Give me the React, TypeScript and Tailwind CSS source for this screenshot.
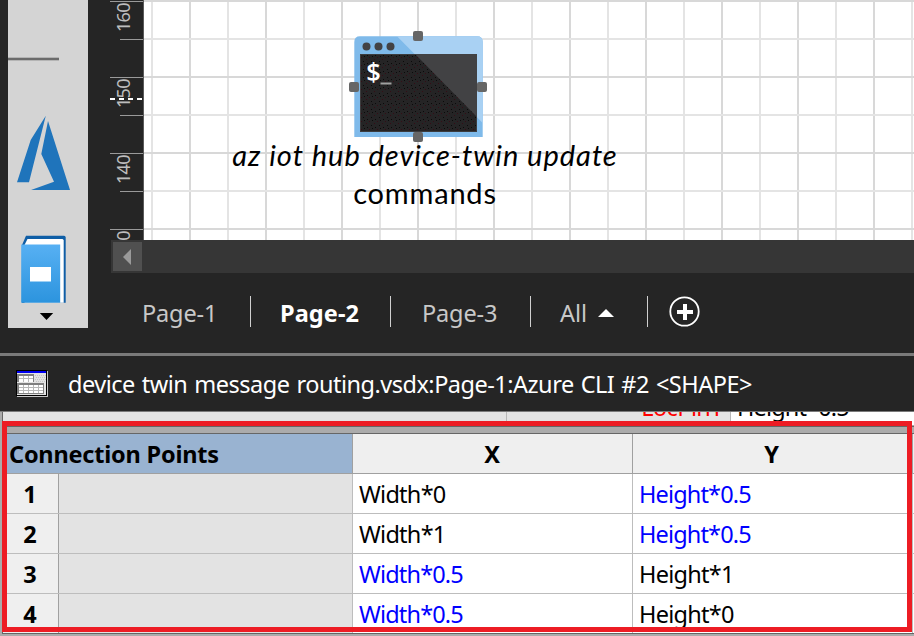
import React from "react";

const UI = "font-['Noto_Sans','Open_Sans',sans-serif]";

function StencilPanel() {
  return (
    <div className="ml-2 h-[328px] w-20 shrink-0 bg-[#d4d4d4]">
      <div className="h-[57px]" />
      <div className="h-1 w-[51px] border-y border-[#b4b4b4] bg-[#6b6b6b]" />
      <svg className="mt-[49px] block" width="80" height="218" viewBox="8 110 80 218">
        <path fill="#1f74bb" d="M45.8 115.7 30.7 140 17 182.3H29ZM48 121 41.3 154 54 181.7 31 190H70Z" />
        <defs>
          <linearGradient id="cover" x1="0" y1="0" x2="0" y2="1">
            <stop offset="0" stopColor="#57b0f3" />
            <stop offset="1" stopColor="#2c94de" />
          </linearGradient>
        </defs>
        <path fill="#0f5ea6" d="M22 245 26 235.7H64Q65.7 235.7 65.7 237.5V302.7H22Z" />
        <path fill="#fff" d="M24.5 245 27.5 239H62.5L63.7 240V302.7H24.5Z" />
        <rect x="21.2" y="244.5" width="39" height="58.2" fill="url(#cover)" />
        <rect x="30" y="267" width="21" height="14.5" fill="#fff" />
        <path fill="#000" d="M39.8 313H53.2L46.5 320Z" />
      </svg>
    </div>
  );
}

function Ruler() {
  return (
    <div className="relative ml-[22px] h-60 w-[34px] shrink-0 overflow-hidden border-r border-[#5a5a5a] pt-px">
      {["160", "150", "140", "130"].map((n) => (
        <div key={n} className="flex h-[76px] flex-col items-end">
          <div className="h-px w-full shrink-0 bg-[#9a9a9a]" />
          <div className="flex h-[37px] w-full justify-center pr-[7px]">
            <span className="mt-px h-[29px] rotate-180 text-[18px] leading-[24px] tracking-[-0.7px] text-[#bdbdbd] [writing-mode:vertical-rl]">
              {n}
            </span>
          </div>
          <div className="h-px w-[23px] shrink-0 bg-[#9a9a9a]" />
        </div>
      ))}
      <div className="absolute left-0 top-[98px] h-0.5 w-[34px] bg-[repeating-linear-gradient(90deg,#fff_0_5px,transparent_5px_9px)]" />
    </div>
  );
}

function Terminal() {
  return (
    <svg className="absolute left-[204px] top-[30px]" width="142" height="114" viewBox="348 30 142 114">
      <defs>
        <pattern id="grain" width="8" height="8" patternUnits="userSpaceOnUse">
          <rect width="8" height="8" fill="#252425" />
          <path fill="#360d16" d="M1 1h1v1H1zM6 3h1v1H6z" />
          <path fill="#0a0a0a" d="M3 5h1v1H3zM4 0h1v1H4zM7 7h1v1H7z" />
        </pattern>
      </defs>
      <path fill="#7fbaea" d="M354.3 137V42Q354.3 36.3 360 36.3H477Q482.7 36.3 482.7 42V137Z" />
      <path fill="#a9d1f3" d="M397 36.3H477Q482.7 36.3 482.7 42V123Z" />
      <rect x="360" y="54" width="117" height="78" fill="#3c3c3e" />
      <rect x="361" y="55" width="115" height="76" fill="url(#grain)" />
      <path fill="#424244" d="M415 54H477V117Z" />
      <g fill="#424244">
        <circle cx="366.5" cy="46.5" r="4" />
        <circle cx="378.5" cy="46.5" r="4" />
        <circle cx="390.5" cy="46.5" r="4" />
      </g>
      <text x="366.2" y="81" fontSize="25.5" fontWeight="600" fill="#fff" className="font-['Open_Sans',sans-serif]">$</text>
      <rect x="380.5" y="82.5" width="11" height="2" fill="#a0a0a0" />
      <g fill="#666">
        <rect x="413" y="31" width="10" height="10" rx="2" />
        <rect x="349" y="82" width="10" height="10" rx="2" />
        <rect x="477" y="82" width="10" height="10" rx="2" />
        <rect x="413" y="132" width="10" height="10" rx="2" />
      </g>
    </svg>
  );
}

function Canvas() {
  return (
    <div className="relative h-60 grow overflow-hidden bg-white">
      <svg className="absolute inset-0" width="770" height="240">
        {Array.from({ length: 21 }, (_, i) => (
          <rect key={i} x={7 + i * 38} y="0" width="2" height="240" fill={i % 2 ? "#d8d8d8" : "#e4e4e4"} />
        ))}
        {Array.from({ length: 7 }, (_, i) => (
          <rect key={i} x="0" y={i * 38} width="770" height="2" fill={i % 2 ? "#e4e4e4" : "#d8d8d8"} />
        ))}
      </svg>
      <Terminal />
      <div className="absolute left-[81px] top-[136px] w-[400px] text-center font-['Lato',sans-serif] text-[29px] leading-[38px] text-black">
        <div className="whitespace-nowrap italic tracking-[1px]">az iot hub device-twin update</div>
        <div className="tracking-[0.8px]">commands</div>
      </div>
    </div>
  );
}

const Sep = () => <div className="h-[31px] w-px shrink-0 bg-[#d0d0d0]" />;

function PageTabs() {
  return (
    <div className="flex h-[80px] items-start pl-[111px] pt-[23px] text-[23.5px] leading-[34px] text-[#c8c8c8]">
      <div className="w-[139px] pl-[31px] tracking-[-0.15px]">Page-1</div>
      <Sep />
      <div className="w-[139px] pl-[29px] font-bold tracking-[0.1px] text-white">Page-2</div>
      <Sep />
      <div className="w-[139px] pl-[31px] tracking-[-0.15px]">Page-3</div>
      <Sep />
      <div className="flex w-[116px] pl-[29px]">
        <span className="w-[38px] tracking-[-0.1px]">All</span>
        <svg className="mt-[13px]" width="16" height="8">
          <path d="M8 0 16 8H0Z" fill="#fff" />
        </svg>
      </div>
      <Sep />
      <svg className="ml-[21px]" width="32" height="32" viewBox="669 296 32 32">
        <circle cx="684.5" cy="311.5" r="14.2" fill="none" stroke="#fff" strokeWidth="1.8" />
        <path d="M683 304h4v6h6v4h-6v6h-4v-6h-6v-4h6z" fill="#fff" />
      </svg>
    </div>
  );
}

function SheetIcon() {
  return (
    <svg className="shrink-0" width="32" height="27" viewBox="16 370 32 27" shapeRendering="crispEdges">
      <path fill="#c4c4c4" d="M17 371h31v26H17z" />
      <path fill="#000" d="M16 370h31v26H16z" />
      <path fill="#e2e2e2" d="M17 373h29v22H17z" />
      <path fill="#0000f0" d="M17 371h29v2H17z" />
      <path fill="#808080" d="M17 374h17v8H17zM17 383h27v11H17z" />
      <path fill="#fff" d="M19 376h14v6H19zM19 385h24v8H19z" />
      <path stroke="#b8b8b8" d="M19 378.5h14M23.5 376v6M28.5 376v6M19 387.5h24M19 390.5h24M23.5 385v8M28.5 385v8M33.5 385v8M38.5 385v8" />
      <path stroke="#c4c4c4" strokeDasharray="1 1" d="M35 375.5h11M36 377.5h10M35 379.5h11M36 381.5h10" />
    </svg>
  );
}

const rows = [
  ["1", "Width*0", "Height*0.5", false, true],
  ["2", "Width*1", "Height*0.5", false, true],
  ["3", "Width*0.5", "Height*1", true, false],
  ["4", "Width*0.5", "Height*0", true, false],
] as const;

function Value({ text, blue }: { text: string; blue: boolean }) {
  return (
    <span className={blue ? "text-[#0000ff] tracking-[-0.85px]" : "text-black tracking-[-0.75px]"}>{text}</span>
  );
}

function ShapeSheet() {
  return (
    <div className="relative h-[224px] overflow-hidden bg-[#ababab] pl-0.5 text-[23.5px] leading-[40px]">
      <div className="h-[222px] w-[912px] overflow-hidden border-b border-l border-[#666] bg-white">
        <div className="flex h-[14px] items-end overflow-hidden border-b border-[#a8a8a8] bg-[#e3e3e3]">
          <div className="h-full w-[504px] border-r border-[#b8b8b8]" />
          <div className="flex h-full w-[224px] items-end justify-end border-r border-[#b8b8b8] pr-[7px]">
            <span className="-mb-0.5 tracking-[-0.6px] text-[#ff0000]">LocPinY</span>
          </div>
          <div className="flex h-full grow items-end bg-white pl-1.5">
            <span className="-mb-0.5 tracking-[-0.85px] text-black">Height*0.5</span>
          </div>
        </div>
        <div className="h-2 border-y border-[#666] bg-[#ababab]" />
        <div className="flex h-10 border-b border-[#a0a0a0] bg-[#efefef] font-bold text-black">
          <div className="w-[350px] border-r border-[#a0a0a0] bg-[#99b3d1] pl-1.5 tracking-[-0.2px]">Connection Points</div>
          <div className="w-[280px] border-r border-[#a0a0a0] pr-px text-center">X</div>
          <div className="w-[280px] border-r border-[#a0a0a0] pr-0.5 text-center">Y</div>
        </div>
        {rows.map(([n, x, y, bx, by]) => (
          <div key={n} className="flex h-10 border-b border-[#bdbdbd]">
            <div className="w-14 border-r border-[#a0a0a0] bg-[#efefef] pr-px text-center font-bold text-black">{n}</div>
            <div className="w-[294px] border-r border-[#bdbdbd] bg-[#e3e3e3]" />
            <div className="w-[280px] border-r border-[#bdbdbd] pl-1.5"><Value text={x} blue={bx} /></div>
            <div className="w-[280px] border-r border-[#bdbdbd] pl-1.5"><Value text={y} blue={by} /></div>
          </div>
        ))}
      </div>
      <div className="absolute left-0.5 top-[9px] h-[211px] w-[910px] border-[5px] border-[#ed1c24]" />
    </div>
  );
}

export default function App() {
  return (
    <div className={`h-[636px] w-[914px] overflow-hidden bg-[#252525] ${UI}`}>
      <div className="flex h-[353px]">
        <StencilPanel />
        <div className="-ml-[88px] flex grow flex-col">
          <div className="flex h-60 pl-[88px]">
            <Ruler />
            <Canvas />
          </div>
          <div className="ml-[111px] flex h-[33px] bg-[#363636] pl-0.5 pt-0.5">
            <div className="flex size-[29px] items-center bg-[#505050] pl-2.5">
              <svg width="8" height="16"><path d="M8 0V16L0 8Z" fill="#9a9a9a" /></svg>
            </div>
          </div>
          <PageTabs />
        </div>
      </div>
      <div className="h-[3px] bg-[#7a7a7a]" />
      <div className="flex h-14 items-center border-b border-[#7a7a7a] pl-4">
        <SheetIcon />
        <span className="ml-5 whitespace-nowrap pt-0.5 text-[23.5px] tracking-[-0.5px] text-white [word-spacing:1.4px]">
          device twin message routing.vsdx:Page-1:Azure CLI #2 &lt;SHAPE&gt;
        </span>
      </div>
      <ShapeSheet />
    </div>
  );
}
